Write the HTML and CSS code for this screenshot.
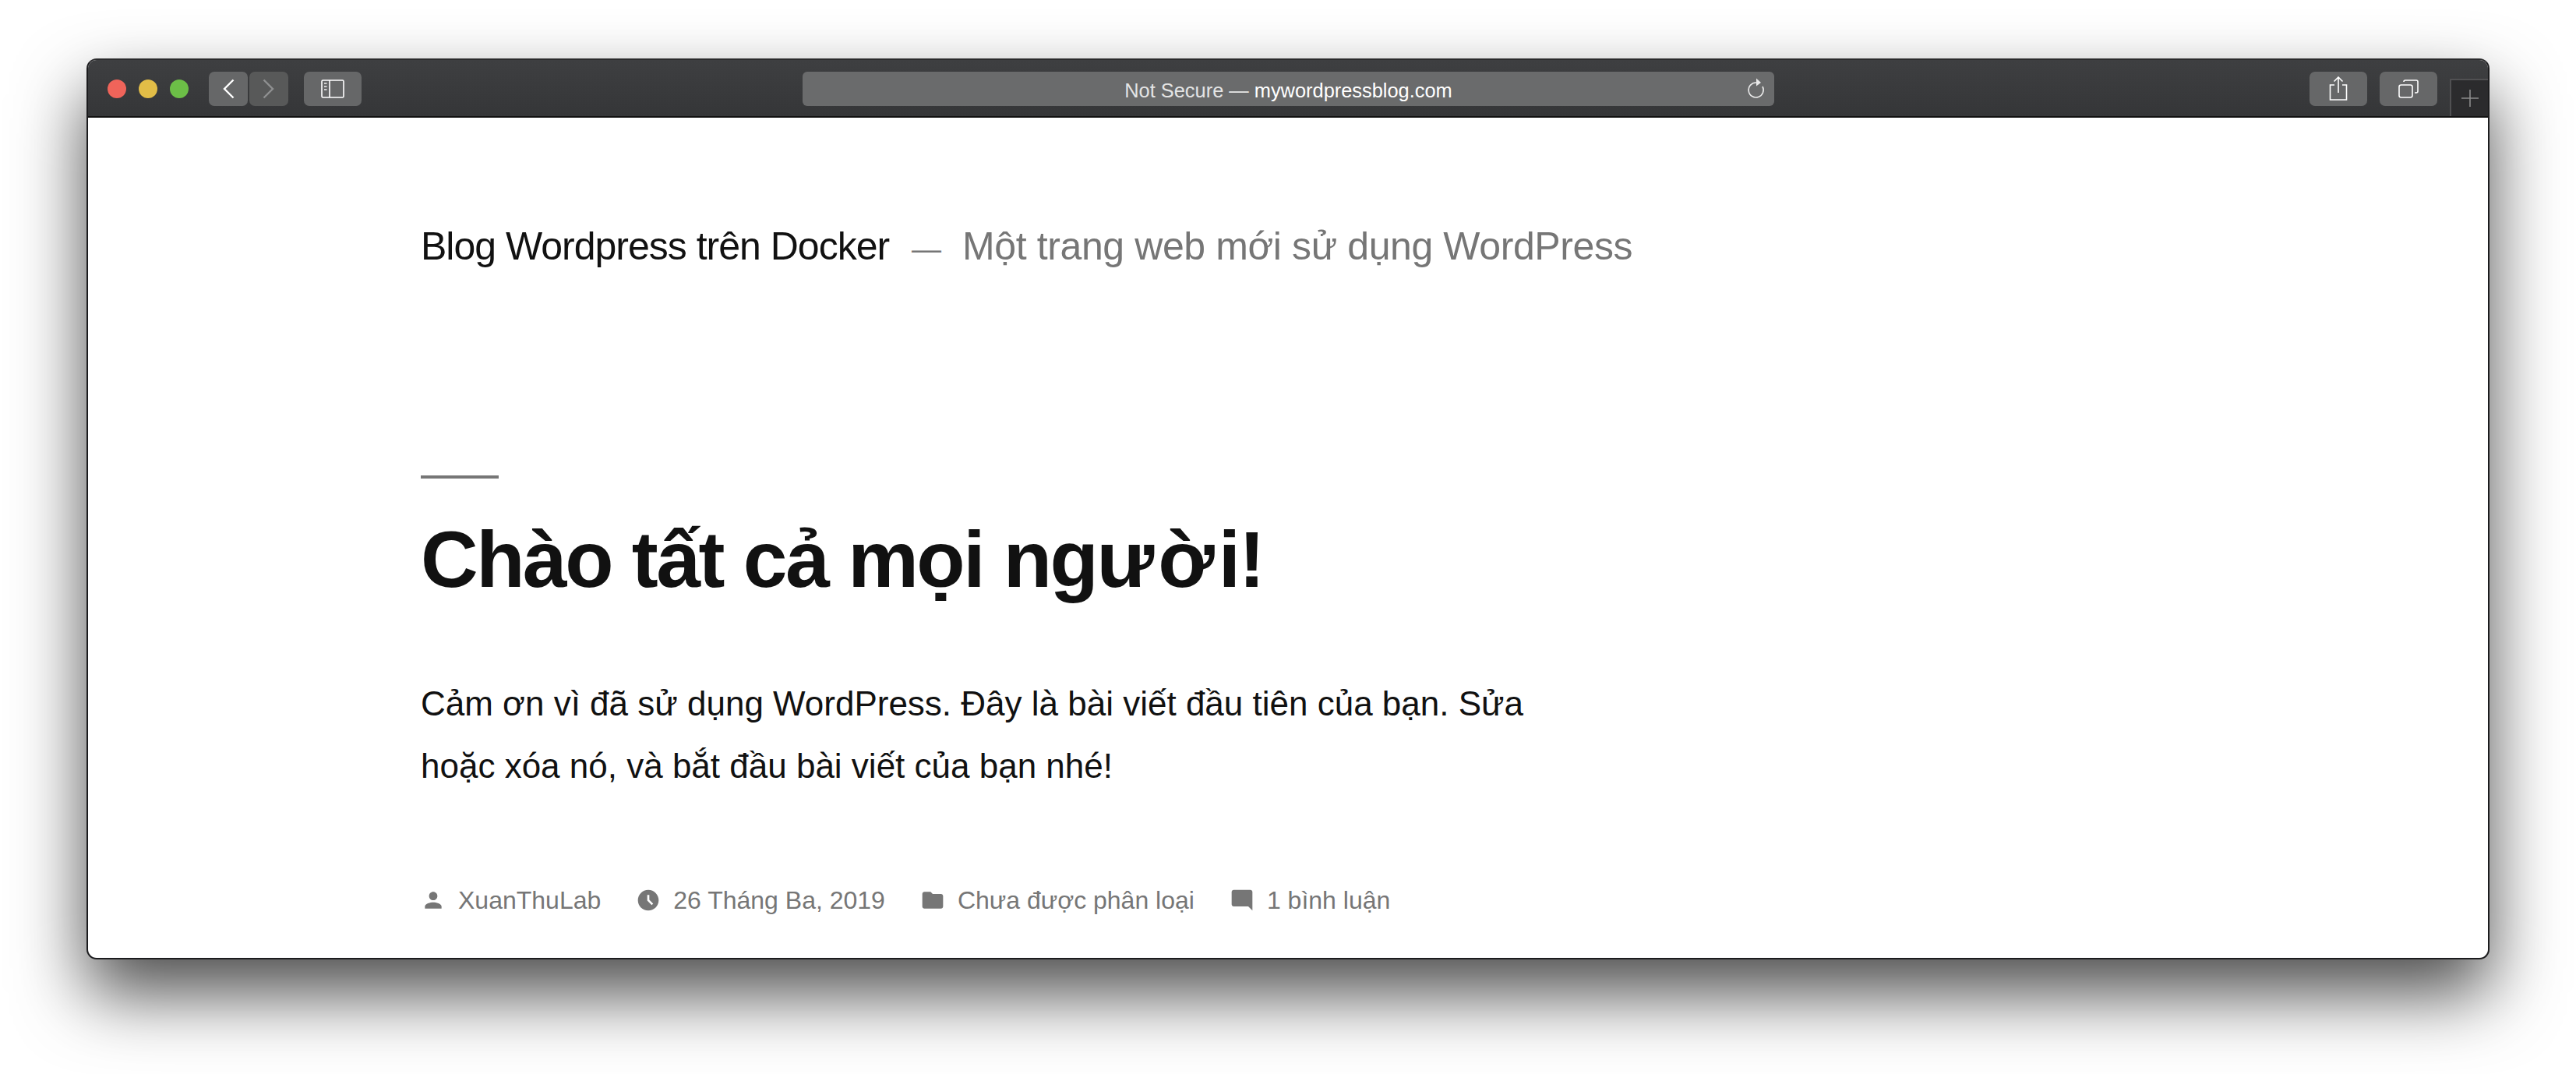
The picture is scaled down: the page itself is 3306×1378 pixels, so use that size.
FILE: index.html
```html
<!DOCTYPE html>
<html lang="vi">
<head>
    <meta charset="UTF-8">
    <title>Blog Wordpress trên Docker</title>
    <link rel="stylesheet" href="styles.css">
</head>
<body>
    <div class="window">
        <!-- Thanh công cụ Safari -->
        <div class="toolbar">
            <div class="toolbar-left">
                <div class="lights">
                    <span class="light light-red"></span>
                    <span class="light light-yellow"></span>
                    <span class="light light-green"></span>
                </div>
                <div class="nav-buttons">
                    <div class="tool-btn btn-nav">
                        <svg width="16" height="26" viewBox="0 0 16 26"><path d="M14.5 1.5 L3 13 L14.5 24.5" fill="none" stroke="#fff" stroke-width="2.4"/></svg>
                    </div>
                    <div class="tool-btn btn-nav btn-disabled">
                        <svg width="16" height="26" viewBox="0 0 16 26"><path d="M1.5 1.5 L13 13 L1.5 24.500" fill="none" stroke="#8f9091" stroke-width="2.4"/></svg>
                    </div>
                </div>
                <div class="tool-btn btn-wide">
                    <svg width="30" height="24" viewBox="0 0 30 24" fill="none" stroke="#fff" stroke-width="1.6">
                        <rect x="1" y="1" width="28" height="22" rx="1.5"/>
                        <path d="M11 1 V23"/>
                        <path d="M4 5 H7.5 M4 9 H7.5 M4 13 H7.5" stroke-width="1.8" stroke="#cfcfcf"/>
                    </svg>
                </div>
            </div>
            <div class="address">
                <span class="address-text">Not Secure — <span class="address-host">mywordpressblog.com</span></span>
                <svg class="reload" width="24" height="30" viewBox="0 0 24 30" fill="none" stroke="#e8e8e8" stroke-width="1.6">
                    <path d="M13 7 A9.5 9.5 0 1 0 21 12"/>
                    <path d="M13 1.5 L19 7 L13 11.5 Z" fill="#e8e8e8" stroke="none"/>
                </svg>
            </div>
            <div class="toolbar-right">
                <div class="tool-btn btn-wide">
                    <svg width="24" height="32" viewBox="0 0 24 32" fill="none" stroke="#fff" stroke-width="1.6">
                        <path d="M7 11 H1.5 V30 H22.5 V11 H17"/>
                        <path d="M12 21 V1 M6.5 6.5 L12 1 L17.5 6.5"/>
                    </svg>
                </div>
                <div class="tool-btn btn-wide">
                    <svg width="26" height="24" viewBox="0 0 26 24" fill="none" stroke="#fff" stroke-width="1.6">
                        <rect x="1" y="7" width="17" height="16" rx="2.5"/>
                        <path d="M7 3 Q7 1 9 1 H23 Q25 1 25 3 V15 Q25 17 23 17 H21"/>
                    </svg>
                </div>
                <div class="new-tab">
                    <svg width="22" height="22" viewBox="0 0 22 22"><path d="M11 0 V22 M0 11 H22" stroke="#8c8c8c" stroke-width="1.6"/></svg>
                </div>
            </div>
        </div>

        <!-- Nội dung trang -->
        <div class="page">
            <div class="site-branding">
                <span class="site-title">Blog Wordpress trên Docker</span>
                <span class="site-sep">—</span>
                <span class="site-desc">Một trang web mới sử dụng WordPress</span>
            </div>
            <div class="title-rule"></div>
            <h1 class="post-title">Chào tất cả mọi ng<span class="title-wide">ườ</span>i!</h1>
            <p class="post-text">Cảm ơn vì đã sử dụng WordPress. Đây là bài viết đầu tiên của bạn. Sửa hoặc xóa nó, và bắt đầu bài viết của bạn nhé!</p>
            <div class="post-meta">
                <span class="meta-item">
                    <svg width="32" height="32" viewBox="0 0 24 24" class="meta-icon"><path d="M12 12c2.21 0 4-1.79 4-4s-1.79-4-4-4-4 1.79-4 4 1.79 4 4 4zm0 2c-2.67 0-8 1.34-8 4v2h16v-2c0-2.66-5.33-4-8-4z"/></svg>
                    XuanThuLab
                </span>
                <span class="meta-item">
                    <svg width="32" height="32" viewBox="0 0 24 24" class="meta-icon"><path d="M11.99 2C6.47 2 2 6.48 2 12s4.47 10 9.99 10C17.52 22 22 17.52 22 12S17.52 2 11.99 2zm3.3 14.71L11 12.41V7h2v4.59l3.71 3.71-1.42 1.41z"/></svg>
                    26 Tháng Ba, 2019
                </span>
                <span class="meta-item">
                    <svg width="32" height="32" viewBox="0 0 24 24" class="meta-icon"><path d="M10 4H4c-1.1 0-1.99.9-1.99 2L2 18c0 1.1.9 2 2 2h16c1.1 0 2-.9 2-2V8c0-1.1-.9-2-2-2h-8l-2-2z"/></svg>
                    Chưa được phân loại
                </span>
                <span class="meta-item">
                    <svg width="32" height="32" viewBox="0 0 24 24" class="meta-icon"><path d="M21.99 4c0-1.1-.89-2-1.99-2H4c-1.1 0-2 .9-2 2v12c0 1.1.9 2 2 2h14l4 4-.01-18z"/></svg>
                    1 bình luận
                </span>
            </div>
        </div>
    </div>
</body>
</html>
```

FILE: styles.css
```css
/* Общие стили */
html, body {
    height: 100%;
}

body {
    margin: 0;
    padding: 75px 111px 0;
    box-sizing: border-box;
    background: white;
    font-family: 'Liberation Sans', Arial, sans-serif;
    overflow: hidden;
}

/* Окно браузера */
.window {
    height: 1156px;
    display: flex;
    flex-direction: column;
    border: 2px solid #1c1c1e;
    border-top-color: #2a2a2c;
    border-radius: 13px;
    overflow: hidden;
    background: white;
    box-sizing: border-box;
    box-shadow: 0 44px 90px rgba(0, 0, 0, 0.7);
}

/* Панель инструментов */
.toolbar {
    height: 74px;
    padding-top: 2px;
    flex: none;
    display: flex;
    align-items: center;
    justify-content: space-between;
    position: relative;
    background: linear-gradient(#3e3f41, #353638);
    border-bottom: 2px solid #111;
    box-sizing: border-box;
}

.toolbar-left {
    display: flex;
    align-items: center;
    padding-left: 25px;
}

.lights {
    display: flex;
    gap: 16px;
    margin-right: 26px;
}

.light {
    width: 24px;
    height: 24px;
    border-radius: 50%;
}

.light-red {
    background: #f0645a;
}

.light-yellow {
    background: #e2bd47;
}

.light-green {
    background: #6cbf47;
}

.nav-buttons {
    display: flex;
    gap: 2px;
    margin-right: 20px;
}

.tool-btn {
    height: 44px;
    display: flex;
    align-items: center;
    justify-content: center;
    background: #666768;
    border-radius: 7px;
}

.btn-nav {
    width: 50px;
}

.btn-disabled {
    background: #585959;
}

.btn-wide {
    width: 74px;
}

.address {
    width: 1247px;
    height: 44px;
    padding-top: 4px;
    position: absolute;
    left: 917px;
    top: 15px;
    display: flex;
    align-items: center;
    justify-content: center;
    background: #6a6b6c;
    border-radius: 6px;
    box-sizing: border-box;
    font-size: 25.4px;
    color: #e4e4e4;
}

.address-host {
    color: white;
}

.reload {
    position: absolute;
    right: 12px;
    top: 7px;
}

.toolbar-right {
    display: flex;
    align-items: center;
    gap: 16px;
    padding-right: 65px;
}

.new-tab {
    width: 49px;
    height: 48px;
    position: absolute;
    right: 0;
    bottom: 0;
    display: flex;
    align-items: center;
    justify-content: center;
    background: #2b2b2d;
    border-top: 2px solid #505052;
    border-left: 2px solid #505052;
    box-sizing: border-box;
}

/* Контент страницы */
.page {
    flex: 1;
    padding: 135px 0 0 427px;
    color: #111;
}

.site-branding {
    display: flex;
    align-items: baseline;
    font-size: 50px;
    line-height: 60px;
    white-space: nowrap;
}

.site-title {
    letter-spacing: -1px;
}

.site-sep {
    margin: 0 27px 0 29px;
    font-size: 38px;
    color: #767676;
}

.site-desc {
    letter-spacing: -0.4px;
    color: #767676;
}

.title-rule {
    width: 100px;
    height: 4px;
    margin-top: 260px;
    background: #767676;
}

.post-title {
    margin: 44px 0 0;
    font-size: 102px;
    line-height: 120px;
    letter-spacing: -2.5px;
    font-weight: bold;
    color: #111;
    white-space: nowrap;
}

.title-wide {
    letter-spacing: 5px;
}

.post-text {
    width: 1480px;
    margin: 85px 0 0;
    font-size: 44px;
    line-height: 80px;
}

.post-meta {
    display: flex;
    align-items: center;
    gap: 45px;
    margin-top: 112px;
    font-size: 32px;
    line-height: 40px;
    color: #767676;
}

.meta-item {
    display: flex;
    align-items: center;
    gap: 16px;
}

.meta-icon {
    fill: #767676;
}
```
